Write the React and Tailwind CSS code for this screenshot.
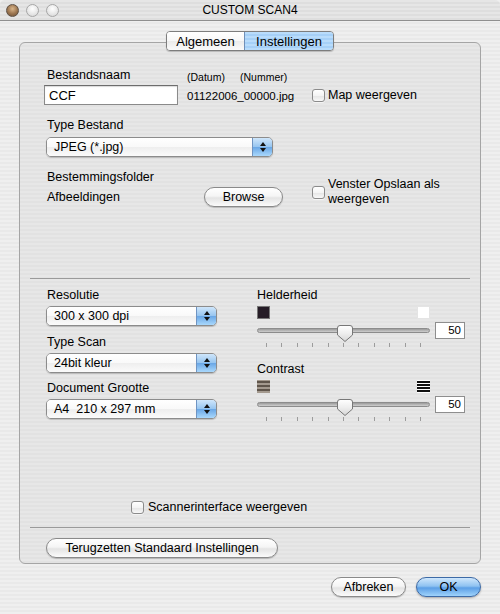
import React from "react";

function Checkbox() {
  return (
    <span className="block w-[13px] h-[13px] shrink-0 rounded-[3px] border border-[#8b8b8b] bg-[linear-gradient(180deg,#ffffff_0%,#f4f4f4_50%,#e4e4e4_51%,#f8f8f8_100%)] shadow-[0_1px_0_rgba(255,255,255,0.6)]" />
  );
}

function Arrows() {
  return (
    <div className="flex flex-col items-center gap-[2px]">
      <svg width="6" height="4" viewBox="0 0 6 4">
        <path d="M3 0 L6 4 L0 4 Z" fill="#111" />
      </svg>
      <svg width="6" height="4" viewBox="0 0 6 4">
        <path d="M0 0 L6 0 L3 4 Z" fill="#111" />
      </svg>
    </div>
  );
}

function Popup({ value, className }) {
  return (
    <div
      className={`flex h-[20px] rounded-[5px] border border-[#8c8c8c] overflow-hidden shadow-[0_1px_1px_rgba(0,0,0,0.18)] ${className}`}
    >
      <div className="flex-1 flex items-center pl-[7px] bg-[linear-gradient(180deg,#ffffff_0%,#f9f9f9_50%,#eeeeee_51%,#fbfbfb_100%)] text-[12.5px] leading-none text-black">
        {value}
      </div>
      <div className="w-[20px] border-l border-[#6f94c2] flex items-center justify-center bg-[linear-gradient(180deg,#cfe6fb_0%,#98c6f0_48%,#6aa7e6_52%,#a9d8fc_100%)]">
        <Arrows />
      </div>
    </div>
  );
}

function PushButton({ children, className }) {
  return (
    <div
      className={`flex items-center justify-center h-[20px] rounded-full border border-[#8a8a8a] bg-[linear-gradient(180deg,#ffffff_0%,#f5f5f5_45%,#e4e4e4_55%,#fbfbfb_100%)] shadow-[0_1px_1px_rgba(0,0,0,0.2)] text-[12.5px] leading-none text-black ${className}`}
    >
      {children}
    </div>
  );
}

function Thumb() {
  return (
    <svg
      className="absolute left-[80px] top-[4px]"
      width="16"
      height="18"
      viewBox="0 0 16 18"
    >
      <defs>
        <linearGradient id="thumbg" x1="0" y1="0" x2="0" y2="1">
          <stop offset="0" stopColor="#ffffff" />
          <stop offset="0.5" stopColor="#eeeeee" />
          <stop offset="1" stopColor="#d6d6d6" />
        </linearGradient>
      </defs>
      <path
        d="M3 0.5 H13 A2.5 2.5 0 0 1 15.5 3 V10 L8 16.5 L0.5 10 V3 A2.5 2.5 0 0 1 3 0.5 Z"
        fill="url(#thumbg)"
        stroke="#777"
        strokeWidth="1"
      />
    </svg>
  );
}

function Slider() {
  const ticks = Array.from({ length: 11 });
  return (
    <div>
      <div className="flex items-center h-[18px]">
        <div className="relative w-[173px] h-[18px] flex items-center">
          <div className="w-full h-[5px] rounded-full border border-[#8c8c8c] bg-[linear-gradient(180deg,#9a9a9a,#cfcfcf)]" />
          <Thumb />
        </div>
        <div className="ml-[5px] w-[30px] h-[17px] border border-[#8e8e8e] bg-white text-right pr-[3px] text-[11.5px] leading-[15px] text-black">
          50
        </div>
      </div>
      <div className="mt-[4px] w-[173px] px-[9px] flex justify-between">
        {ticks.map((_, i) => (
          <span key={i} className="block w-px h-[4px] bg-[#9c9c9c]" />
        ))}
      </div>
    </div>
  );
}

export default function App() {
  return (
    <div className="w-[500px] h-[614px] overflow-hidden font-['Liberation_Sans',Arial,sans-serif] text-black bg-[repeating-linear-gradient(180deg,#efefef_0px,#efefef_2px,#e9e9e9_2px,#e9e9e9_4px)]">
      {/* Title bar */}
      <div className="relative h-[21px] flex items-center justify-center border-b border-[#8f8f8f] rounded-t-[5px] bg-[repeating-linear-gradient(180deg,#e6e6e6_0px,#e6e6e6_2px,#dedede_2px,#dedede_4px)]">
        <div className="absolute left-[6px] top-[4px] flex gap-[7px]">
          <span className="block w-[13px] h-[13px] rounded-full border border-[#5f5145] bg-[radial-gradient(circle_at_50%_35%,#d9b58a_0%,#9b7550_55%,#6b5038_100%)]" />
          <span className="block w-[13px] h-[13px] rounded-full border border-[#a6a6a6] bg-[radial-gradient(circle_at_50%_35%,#ffffff_0%,#e6e6e6_60%,#cfcfcf_100%)]" />
          <span className="block w-[13px] h-[13px] rounded-full border border-[#a6a6a6] bg-[radial-gradient(circle_at_50%_35%,#ffffff_0%,#e6e6e6_60%,#cfcfcf_100%)]" />
        </div>
        <span className="text-[12px] text-black leading-none">CUSTOM SCAN4</span>
      </div>

      {/* Tabs */}
      <div className="relative z-10 mt-[10px] flex justify-center">
        <div className="flex h-[20px] rounded-[4px] border border-[#7d7d7d] overflow-hidden shadow-[0_1px_1px_rgba(0,0,0,0.2)] text-[13px] leading-none">
          <div className="w-[77px] flex items-center justify-center bg-[linear-gradient(180deg,#ffffff_0%,#f7f7f7_50%,#ebebeb_51%,#fafafa_100%)]">
            Algemeen
          </div>
          <div className="w-[89px] flex items-center justify-center border-l border-[#6f8fb8] bg-[repeating-linear-gradient(180deg,#b9dcfb_0px,#b9dcfb_2px,#a6d0f7_2px,#a6d0f7_4px)]">
            Instellingen
          </div>
        </div>
      </div>

      {/* Group box */}
      <div className="relative -mt-[9px] mx-[19px] h-[522px] rounded-[6px] border border-[#a5a5a5] bg-[repeating-linear-gradient(180deg,#e7e7e7_0px,#e7e7e7_2px,#e2e2e2_2px,#e2e2e2_4px)]">
        {/* Row 1 */}
        <div className="flex pl-[24px] pt-[25px]">
          <div className="w-[134px]">
            <div className="ml-[3px] text-[12.5px] leading-[15px]">Bestandsnaam</div>
            <div className="mt-[2px] h-[20px] border border-[#8a8a8a] border-t-[#6d6d6d] bg-white pl-[4px] flex items-center text-[13px] leading-none shadow-[inset_0_1px_1px_rgba(0,0,0,0.15)]">
              CCF
            </div>
          </div>
          <div className="ml-[9px] w-[125px]">
            <div className="mt-[3px] flex text-[10.5px] leading-[13px]">
              <span className="w-[53px]">(Datum)</span>
              <span>(Nummer)</span>
            </div>
            <div className="mt-[5px] text-[11.5px] leading-[14px]">01122006_00000.jpg</div>
          </div>
          <div className="pt-[21px] flex items-start">
            <Checkbox />
            <span className="ml-[3px] text-[12.5px] leading-[13px]">Map weergeven</span>
          </div>
        </div>

        {/* Row 2 */}
        <div className="pl-[24px] mt-[13px]">
          <div className="ml-[3px] text-[12.5px] leading-[15px]">Type Bestand</div>
          <Popup value="JPEG (*.jpg)" className="mt-[4px] ml-[2px] w-[227px]" />
        </div>

        {/* Row 3 */}
        <div className="flex pl-[24px] mt-[13px]">
          <div className="w-[160px]">
            <div className="ml-[3px] text-[12.5px] leading-[15px]">Bestemmingsfolder</div>
            <div className="ml-[3px] mt-[5px] text-[12.5px] leading-[15px]">Afbeeldingen</div>
          </div>
          <PushButton className="mt-[17px] w-[79px]">Browse</PushButton>
          <div className="ml-[29px] mt-[7px] flex items-center">
            <Checkbox />
            <span className="ml-[3px] text-[12.5px] leading-[15px]">
              Venster Opslaan als
              <br />
              weergeven
            </span>
          </div>
        </div>

        {/* Separator */}
        <div className="mx-[10px] mt-[71px] border-t border-[#9a9a9a]" />

        {/* Lower section */}
        <div className="flex pl-[26px]">
          <div className="w-[171px]">
            <div className="ml-px mt-[9px] text-[12.5px] leading-[15px]">Resolutie</div>
            <Popup value="300 x 300 dpi" className="mt-[3px]" />
            <div className="ml-px mt-[9px] text-[12.5px] leading-[15px]">Type Scan</div>
            <Popup value="24bit kleur" className="mt-[3px]" />
            <div className="ml-px mt-[8px] text-[12.5px] leading-[15px]">Document Grootte</div>
            <Popup value="A4  210 x 297 mm" className="mt-[3px] whitespace-pre" />
          </div>
          <div className="ml-[40px]">
            <div className="mt-[9px] text-[12.5px] leading-[15px]">Helderheid</div>
            <div className="mt-[3px] w-[173px] flex justify-between">
              <span className="block w-[13px] h-[13px] bg-[#261d27] border border-[#777]" />
              <span className="block w-[13px] h-[13px] bg-white border border-[#e4e4e4]" />
            </div>
            <div className="mt-[2px]">
              <Slider />
            </div>
            <div className="mt-[15px] text-[12.5px] leading-[15px]">Contrast</div>
            <div className="mt-[3px] w-[173px] flex justify-between">
              <svg width="13" height="13" viewBox="0 0 13 13">
                <rect x="0" y="0" width="13" height="13" fill="#a49a8f" />
                <rect x="0" y="1" width="13" height="2" fill="#5f554b" />
                <rect x="0" y="5" width="13" height="2" fill="#5f554b" />
                <rect x="0" y="9" width="13" height="2" fill="#5f554b" />
              </svg>
              <svg width="13" height="13" viewBox="0 0 13 13">
                <rect x="0" y="0" width="13" height="13" fill="#ffffff" />
                <rect x="0" y="1" width="13" height="2" fill="#111" />
                <rect x="0" y="4" width="13" height="2" fill="#111" />
                <rect x="0" y="7" width="13" height="2" fill="#111" />
                <rect x="0" y="10" width="13" height="2" fill="#111" />
              </svg>
            </div>
            <div className="mt-[2px]">
              <Slider />
            </div>
          </div>
        </div>

        {/* Scanner interface */}
        <div className="flex items-center pl-[111px] mt-[80px]">
          <Checkbox />
          <span className="ml-[4px] text-[12.5px] leading-none">Scannerinterface weergeven</span>
        </div>

        <div className="mx-[10px] mt-[13px] border-t border-[#9a9a9a]" />

        <div className="pl-[26px] mt-[10px]">
          <PushButton className="w-[232px]">Terugzetten Standaard Instellingen</PushButton>
        </div>
      </div>

      {/* Bottom buttons */}
      <div className="mt-[13px] pr-[19px] flex justify-end gap-[10px]">
        <PushButton className="w-[75px]">Afbreken</PushButton>
        <div className="w-[65px] h-[20px] flex items-center justify-center rounded-full border border-[#3d6aa6] bg-[linear-gradient(180deg,#cfe7fc_0%,#8fc2f1_45%,#5c9fe6_55%,#9fd3fb_100%)] shadow-[0_1px_2px_rgba(0,0,0,0.3)] text-[12.5px] leading-none">
          OK
        </div>
      </div>
    </div>
  );
}
